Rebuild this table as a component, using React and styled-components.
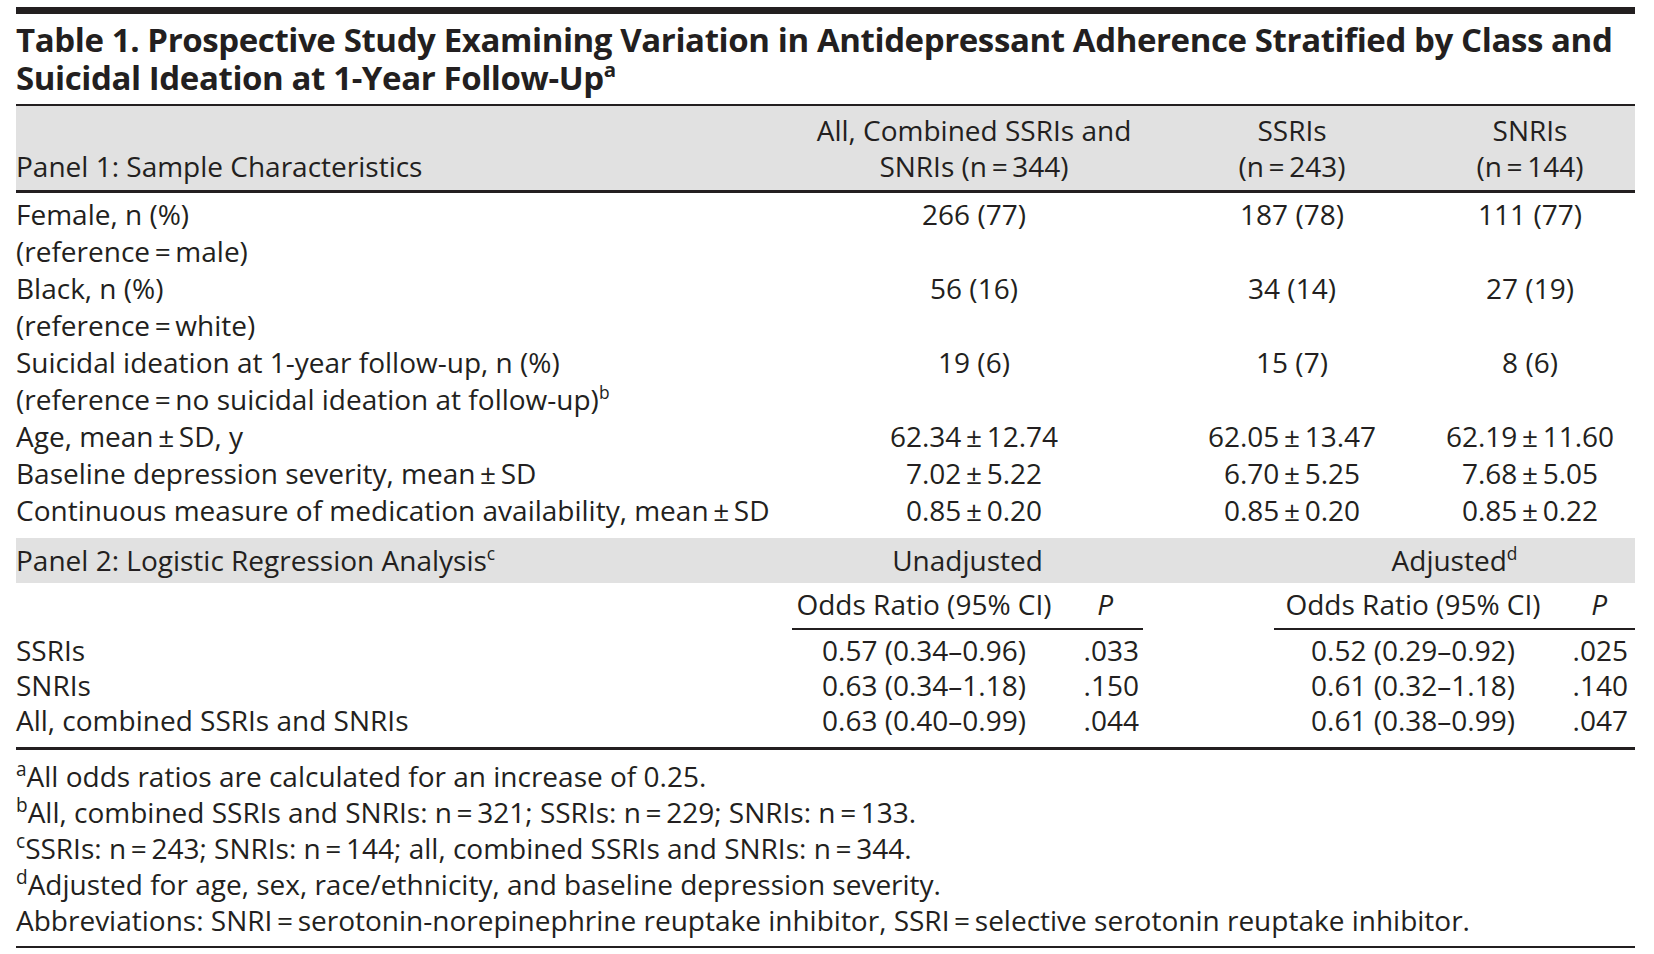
import React from "react";
import styled, { createGlobalStyle } from "styled-components";

const INK = "#231f20";
const BAND = "#e1e1e1";
const P1_COLS = "784px 348px 288px 188px 1fr";
const P2_COLS = "776px 264px 87px 131px 278px 1fr";

const GlobalStyle = createGlobalStyle`
  html, body { margin: 0; padding: 0; background: #ffffff; }
  body {
    font-family: "Open Sans", Lato, "Liberation Sans", sans-serif;
    color: ${INK};
    -webkit-font-smoothing: antialiased;
  }
`;

const Page = styled.div`
  width: 1619px;
  padding: 7px 19px 0 16px;
  font-size: 28px;
`;

const Rule = styled.div`
  height: ${(p) => p.$h}px;
  background: ${INK};
`;

const Title = styled.h1`
  margin: 6.6px 0 7.4px;
  font-size: 33px;
  line-height: 38px;
  font-weight: 700;
  letter-spacing: -0.4px;
  white-space: nowrap;
`;

const TitleLine = styled.span`
  display: block;
  height: 38px;
`;

const Sup = styled.sup`
  font-size: 0.62em;
  line-height: 0;
  vertical-align: 0.62em;
  font-weight: inherit;
`;

const Band = styled.div`
  background: ${BAND};
`;

const HeadGrid = styled.div`
  display: grid;
  grid-template-columns: ${P1_COLS};
  padding: 6px 0;
  line-height: 36px;
`;

const HeadCell = styled.div`
  display: flex;
  flex-direction: column;
  justify-content: flex-end;
  text-align: ${(p) => (p.$left ? "left" : "center")};
  white-space: nowrap;
`;

const Body1 = styled.div`
  padding: 3px 0 9px;
`;

const Row1 = styled.div`
  display: grid;
  grid-template-columns: ${P1_COLS};
  line-height: 37px;
`;

const Label = styled.div`
  text-align: left;
  white-space: nowrap;
`;

const Value = styled.div`
  text-align: center;
  white-space: nowrap;
`;

const Band2Grid = styled.div`
  display: grid;
  grid-template-columns: ${P2_COLS};
  line-height: 45px;
`;

const GroupTitle = styled.div`
  grid-column: ${(p) => p.$cols};
  text-align: center;
`;

const SubHead = styled.div`
  display: grid;
  grid-template-columns: ${P2_COLS};
  line-height: 37px;
  padding-top: 3px;
`;

const SubCell = styled.div`
  border-bottom: ${(p) => (p.$line ? `2px solid ${INK}` : "2px solid transparent")};
  padding-bottom: 5px;
  text-align: ${(p) => p.$align || "center"};
  padding-right: ${(p) => p.$pr || 0}px;
  font-style: ${(p) => (p.$italic ? "italic" : "normal")};
  white-space: nowrap;
`;

const Body2 = styled.div`
  padding: 3px 0 9px;
`;

const Row2 = styled.div`
  display: grid;
  grid-template-columns: ${P2_COLS};
  line-height: 35px;
`;

const PVal = styled.div`
  text-align: right;
  padding-right: ${(p) => p.$pr}px;
  white-space: nowrap;
`;

const Notes = styled.div`
  padding: 8px 0 8px;
  line-height: 36px;
`;

const Note = styled.div`
  white-space: nowrap;
`;

const NoteSup = styled.sup`
  font-size: 0.68em;
  line-height: 0;
  vertical-align: 0.6em;
`;

const t = "\u2009";

const panel1 = [
  { label: ["Female, n (%)", `(reference${t}=${t}male)`], v: ["266 (77)", "187 (78)", "111 (77)"] },
  { label: ["Black, n (%)", `(reference${t}=${t}white)`], v: ["56 (16)", "34 (14)", "27 (19)"] },
  {
    label: ["Suicidal ideation at 1-year follow-up, n (%)", `(reference${t}=${t}no suicidal ideation at follow-up)`],
    sup: "b",
    v: ["19 (6)", "15 (7)", "8 (6)"],
  },
  { label: [`Age, mean${t}±${t}SD, y`], v: [`62.34${t}±${t}12.74`, `62.05${t}±${t}13.47`, `62.19${t}±${t}11.60`] },
  { label: [`Baseline depression severity, mean${t}±${t}SD`], v: [`7.02${t}±${t}5.22`, `6.70${t}±${t}5.25`, `7.68${t}±${t}5.05`] },
  {
    label: [`Continuous measure of medication availability, mean${t}±${t}SD`],
    v: [`0.85${t}±${t}0.20`, `0.85${t}±${t}0.20`, `0.85${t}±${t}0.22`],
  },
];

const panel2 = [
  { label: "SSRIs", a: ["0.57 (0.34–0.96)", ".033"], b: ["0.52 (0.29–0.92)", ".025"] },
  { label: "SNRIs", a: ["0.63 (0.34–1.18)", ".150"], b: ["0.61 (0.32–1.18)", ".140"] },
  { label: "All, combined SSRIs and SNRIs", a: ["0.63 (0.40–0.99)", ".044"], b: ["0.61 (0.38–0.99)", ".047"] },
];

const notes = [
  ["a", "All odds ratios are calculated for an increase of 0.25."],
  ["b", `All, combined SSRIs and SNRIs: n${t}=${t}321; SSRIs: n${t}=${t}229; SNRIs: n${t}=${t}133.`],
  ["c", `SSRIs: n${t}=${t}243; SNRIs: n${t}=${t}144; all, combined SSRIs and SNRIs: n${t}=${t}344.`],
  ["d", "Adjusted for age, sex, race/ethnicity, and baseline depression severity."],
  [null, `Abbreviations: SNRI${t}=${t}serotonin-norepinephrine reuptake inhibitor, SSRI${t}=${t}selective serotonin reuptake inhibitor.`],
];

export default function App() {
  return (
    <>
      <GlobalStyle />
      <Page>
        <Rule $h={7} />
        <Title>
          <TitleLine>
            Table 1. Prospective Study Examining Variation in Antidepressant Adherence Stratified by Class and
          </TitleLine>
          <TitleLine>
            Suicidal Ideation at 1-Year Follow-Up<Sup>a</Sup>
          </TitleLine>
        </Title>
        <Rule $h={2} />
        <Band>
          <HeadGrid>
            <HeadCell $left>Panel 1: Sample Characteristics</HeadCell>
            <HeadCell>
              <div>All, Combined SSRIs and</div>
              <div>SNRIs (n{t}={t}344)</div>
            </HeadCell>
            <HeadCell>
              <div>SSRIs</div>
              <div>(n{t}={t}243)</div>
            </HeadCell>
            <HeadCell>
              <div>SNRIs</div>
              <div>(n{t}={t}144)</div>
            </HeadCell>
          </HeadGrid>
        </Band>
        <Rule $h={3} />
        <Body1>
          {panel1.map((r, i) => (
            <Row1 key={i}>
              <Label>
                {r.label.map((l, j) => (
                  <div key={j}>
                    {l}
                    {r.sup && j === r.label.length - 1 ? <Sup>{r.sup}</Sup> : null}
                  </div>
                ))}
              </Label>
              {r.v.map((v, j) => (
                <Value key={j}>{v}</Value>
              ))}
            </Row1>
          ))}
        </Body1>
        <Band>
          <Band2Grid>
            <Label>
              Panel 2: Logistic Regression Analysis<Sup>c</Sup>
            </Label>
            <GroupTitle $cols="2 / 4">Unadjusted</GroupTitle>
            <GroupTitle $cols="5 / 7">
              Adjusted<Sup>d</Sup>
            </GroupTitle>
          </Band2Grid>
        </Band>
        <SubHead>
          <SubCell $align="left" />
          <SubCell $line>Odds Ratio (95% CI)</SubCell>
          <SubCell $line $italic $align="right" $pr={30}>
            P
          </SubCell>
          <SubCell />
          <SubCell $line>Odds Ratio (95% CI)</SubCell>
          <SubCell $line $italic $align="right" $pr={28}>
            P
          </SubCell>
        </SubHead>
        <Body2>
          {panel2.map((r, i) => (
            <Row2 key={i}>
              <Label>{r.label}</Label>
              <Value>{r.a[0]}</Value>
              <PVal $pr={4}>{r.a[1]}</PVal>
              <div />
              <Value>{r.b[0]}</Value>
              <PVal $pr={7}>{r.b[1]}</PVal>
            </Row2>
          ))}
        </Body2>
        <Rule $h={3} />
        <Notes>
          {notes.map(([s, text], i) => (
            <Note key={i}>
              {s ? <NoteSup>{s}</NoteSup> : null}
              {text}
            </Note>
          ))}
        </Notes>
        <Rule $h={2} />
      </Page>
    </>
  );
}
